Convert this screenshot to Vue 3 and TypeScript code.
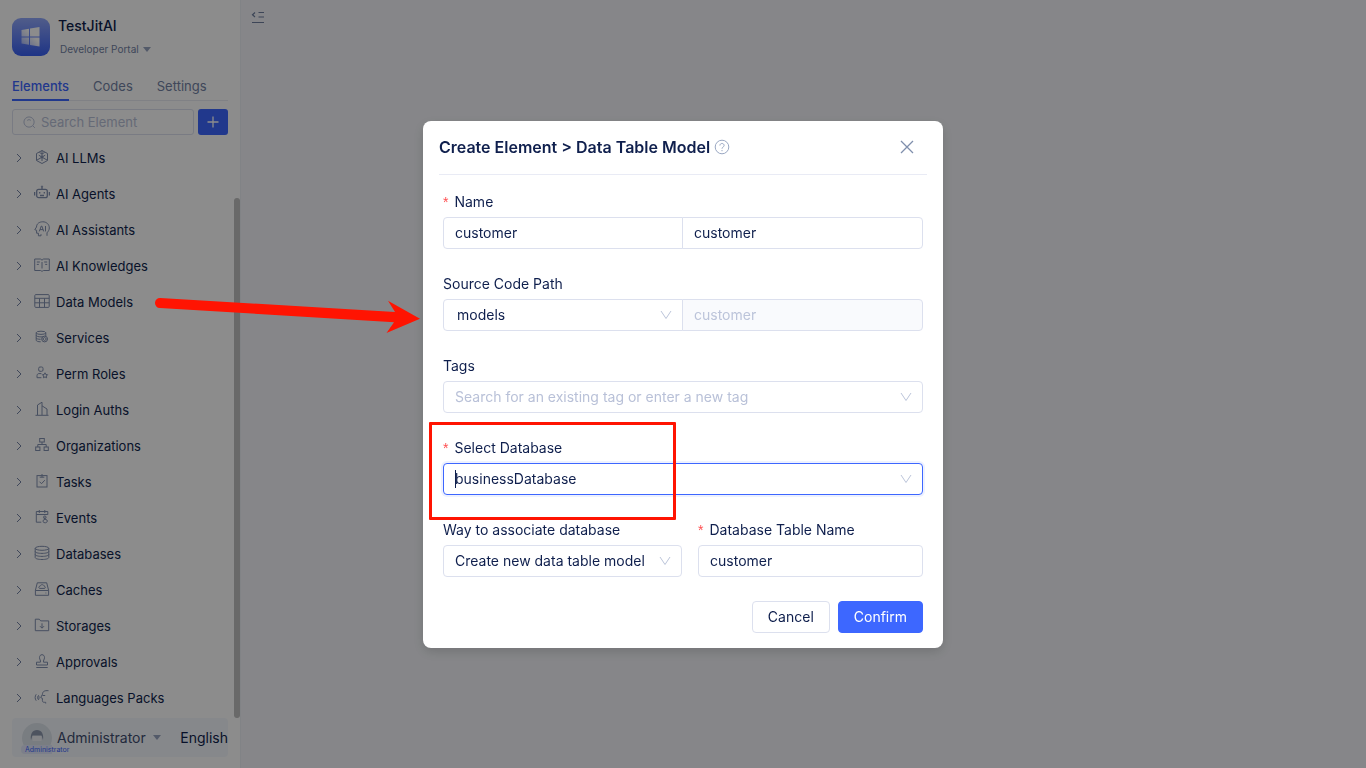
<script setup lang="ts">
import { ref } from 'vue'

interface MenuItem {
  label: string
  icon: string
}

const menu: MenuItem[] = [
  { label: 'AI LLMs', icon: '<path d="M8 1.500 13.500 4.500v7L8 14.500l-5.500-3v-7z"/><path d="M8 1.500v5.800M8 8.200l5.300 3M8 8.200l-5.300 3M4.800 6.200 8 8.100l3.200-1.900M8 8.500v3.500M5.400 3.400 8 5l2.600-1.600"/><circle cx="8" cy="8" r="1"/>' },
  { label: 'AI Agents', icon: '<rect x="2.700" y="4.300" width="10.600" height="8.400" rx="2" stroke-width="1.300"/><path d="M8 4V2M.6 7v3.600M15.400 7v3.600M5.700 7v1.600M10.300 7v1.600M6 10.500h4" stroke-width="1.300"/><circle cx="8" cy="1.500" r=".6"/>' },
  { label: 'AI Assistants', icon: '<path d="M4.400 14.800v-2.600H2.600V9.300L.8 8.700 2.500 6C2.600 2.700 5.200.8 8.800.8c3.700 0 6.500 2.600 6.500 6.100 0 2-1 3.500-2.300 4.900v3M4.400 14.800H7v-1.600"/><path d="m5.300 10.400 2-5.400h.5l1.900 5.400M6 8.600h3M11.500 5v5.400"/>' },
  { label: 'AI Knowledges', icon: '<path d="M8 3.300C7.700 2.300 7 2 6 2H.7v11.500H6.500c.8 0 1.200.4 1.500 1 .3-.6.700-1 1.500-1h5.800V2H10c-1 0-1.700.3-2 1.300zM8 5v6.500M2.800 5h3M2.800 7.400h2M10.200 5h3M11.200 7.400h2"/>' },
  { label: 'Data Models', icon: '<rect x=".8" y="1.600" width="14.400" height="12.800" rx="1"/><path d="M.8 5.300h14.400M.8 9.800h14.400M5.500 5.300v9M10.500 5.300v9"/>' },
  { label: 'Services', icon: '<ellipse cx="7" cy="3.800" rx="4.800" ry="1.600"/><path d="M2.200 3.800v7.400c0 1 2 1.600 4.500 1.600M11.800 3.800V7M2.200 6.300c0 1 2.200 1.600 4.800 1.600 1.200 0 2.400 0 3.200-.5M2.200 8.800c0 1 2 1.500 4.400 1.500"/><circle cx="10.600" cy="10" r="2.900"/><path d="m8.700 10 1.900-1.600L12.500 10l-1.900 1.600z"/>' },
  { label: 'Perm Roles', icon: '<rect x="4.700" y="2" width="4.300" height="4.300" rx="1.300"/><path d="M7.400 12.700H3v-2c0-1.300.8-2.100 2-2.100h2.400M11 7.800l.8 1.700 1.800.2-1.300 1.300.3 1.800-1.600-.9-1.600.9.3-1.800-1.300-1.300 1.800-.2z"/>' },
  { label: 'Login Auths', icon: '<path d="M1.500 14.300h13M3.500 14V4L8 1.200V14M8 4.800l5 3.200v6"/>' },
  { label: 'Organizations', icon: '<rect x="5.700" y="1.500" width="4.600" height="3.500"/><rect x="1.700" y="10" width="4.200" height="3.500"/><rect x="10.100" y="10" width="4.200" height="3.500"/><path d="M8 5v2.500M3.800 10V7.500h8.400V10"/>' },
  { label: 'Tasks', icon: '<rect x="3" y="2.600" width="10" height="11.400"/><path d="M8 1v3.200M5.700 4.200h4.600M5.500 8.700l2 2 3.300-3.500"/>' },
  { label: 'Events', icon: '<path d="M2.300 13.200V2.500h11.500v3.200M2.300 5.500h11.500M5.300 1v3M10.800 1v3M2.300 13.200h5"/><circle cx="10.800" cy="8.300" r="1.300"/><path d="M10.800 8.300v2.500M9 11.500c1.300-1.700 4.600-1.200 4.400.6-.3 2-3.300 2.200-4.400.6z"/>' },
  { label: 'Databases', icon: '<ellipse cx="8" cy="3.300" rx="6.800" ry="2"/><path d="M1.200 3.300v9.200c0 1.200 3 2 6.800 2s6.800-.8 6.800-2V3.300M1.200 6.400c0 1.200 3 2 6.800 2s6.800-.8 6.800-2M1.200 9.400c0 1.200 3 2 6.800 2s6.800-.8 6.800-2"/>' },
  { label: 'Caches', icon: '<path d="M3.300 1.800h9.400l1.900 7.500v5H1.400v-5zM1.400 9.500h13.200M11.500 12h.8M5.500 7.400h5.200c1-.7.500-2.200-.5-2.200-.3-2-3.800-2-4.100 0-1.300 0-1.700 1.600-.6 2.200z"/>' },
  { label: 'Storages', icon: '<path d="M1.300 13.700V2.200h4l1.400 1.700h8v9.800zM8 6.300v4.700M6 9.200l2 2 2-2"/>' },
  { label: 'Approvals', icon: '<path d="M2.300 14.500h11.400M2.500 12V9.200h3.900c.6-1.700-.9-2.700-.9-4.500 0-1.900 1-3 2.500-3s2.500 1.100 2.500 3c0 1.800-1.500 2.800-.9 4.500h3.900V12z"/>' },
  { label: 'Languages Packs', icon: '<path d="M14.500 1.700c-4-.4-6 .8-6 3.500L6.700 8.600l1.700.7v2.200c0 1.300.6 1.900 2 1.800h1.300v1.200M8.500 6.500h2.700M4.500 6.500c.7 1.300.7 2.900 0 4.200M2.200 5.300C.8 7.300.8 9.700 2.200 11.700M4.500 6.500c-1.200 1-1.200 3.200 0 4.200"/>' },
]

const tabs = ['Elements', 'Codes', 'Settings']
const activeTab = ref('Elements')
const search = ref('')
const title = ref('customer')
const code = ref('customer')
const folder = ref('models')
const tag = ref('')
const database = ref('businessDatabase')
const way = ref('Create new data table model')
const tableName = ref('customer')
</script>

<template>
  <div class="page">
    <aside class="sidebar">
      <header class="app-head">
        <svg class="logo" viewBox="0 0 38 38" aria-hidden="true">
          <defs>
            <linearGradient id="logoFill" x1="0" y1="0" x2="0" y2="1">
              <stop offset="0" stop-color="#93a9fb" />
              <stop offset="1" stop-color="#3860f4" />
            </linearGradient>
            <linearGradient id="paneFill" x1="0" y1="1" x2="1" y2="0">
              <stop offset="0" stop-color="#fff" stop-opacity=".4" />
              <stop offset=".6" stop-color="#fff" />
            </linearGradient>
          </defs>
          <rect width="38" height="38" rx="9" fill="url(#logoFill)" />
          <path d="M9.500 12l7.500-1.300v7.800H9.500zM18 10.500l9.500-1.500v9.500H18zM9.500 19.500H17v7.300l-7.500-1.300zM18 19.500h9.500V28.500L18 27z" fill="url(#paneFill)" />
        </svg>
        <div>
          <h1 class="app-name">TestJitAI</h1>
          <button class="portal" type="button">Developer Portal <i class="caret"></i></button>
        </div>
      </header>

      <nav class="tabs">
        <button v-for="t in tabs" :key="t" type="button" class="tab" :class="{ active: t === activeTab }" @click="activeTab = t">{{ t }}</button>
      </nav>

      <div class="search-row">
        <label class="search">
          <svg viewBox="0 0 14 14" aria-hidden="true"><circle cx="6.500" cy="6.500" r="5.500" /><path d="m10.500 10.500 2.300 2.300M4.500 4.800c1-1.100 3-1.100 4 0" /></svg>
          <input v-model="search" type="text" placeholder="Search Element" aria-label="Search Element" />
        </label>
        <button class="add" type="button" aria-label="Add element">
          <svg viewBox="0 0 12 12" aria-hidden="true"><path d="M6 .5v11M.5 6h11" /></svg>
        </button>
      </div>

      <div class="list-wrap">
        <ul class="list">
          <li v-for="m in menu" :key="m.label">
            <button type="button" class="row">
              <svg class="chev" viewBox="0 0 14 14" aria-hidden="true"><path d="m5 3 4 4-4 4" /></svg>
              <svg class="ico" viewBox="0 0 16 16" aria-hidden="true" v-html="m.icon"></svg>
              <span>{{ m.label }}</span>
            </button>
          </li>
        </ul>
        <div class="thumb"></div>
      </div>

      <footer class="user">
        <div class="avatar">
          <svg viewBox="0 0 30 30" aria-hidden="true">
            <circle cx="15" cy="15" r="15" fill="#dde3eb" />
            <path d="M9 17c-1-6 1.500-10 6-10s7 4 6 10l-1.500-4.500h-9z" fill="#8c98ae" />
            <path d="M10.500 13h9v5h-9z" fill="#eef1f6" />
          </svg>
          <span class="badge">Administrator</span>
        </div>
        <button class="who" type="button">Administrator <i class="caret"></i></button>
        <button class="lang" type="button">English</button>
      </footer>
    </aside>

    <main class="main">
      <button class="fold" type="button" aria-label="Collapse sidebar">
        <svg viewBox="0 0 14 12" aria-hidden="true"><path d="M7.500 1.500H13M7.500 6H13M1 11.500h12M4 1.500 1.500 3.700 4 6" /></svg>
      </button>
    </main>

    <div class="mask">
      <form class="modal" role="dialog" aria-labelledby="dlgTitle" @submit.prevent>
        <header class="modal-head">
          <h2 id="dlgTitle">Create Element &gt; Data Table Model</h2>
          <svg class="help" viewBox="0 0 16 16" aria-hidden="true"><circle cx="8" cy="8" r="6.800" /><path d="M5.900 6.500c0-2.700 4.200-2.700 4.200 0C10.100 8 8 8 8 9.700M8 11v1.200" /></svg>
          <button class="close" type="button" aria-label="Close">
            <svg viewBox="0 0 14 14" aria-hidden="true"><path d="m1 1 12 12M13 1 1 13" /></svg>
          </button>
        </header>

        <div class="body">
          <div class="field">
            <label class="req" for="title">Name</label>
            <div class="group">
              <input id="title" v-model="title" class="ctl left" type="text" />
              <div class="right">
                <input v-model="code" class="ctl" type="text" aria-label="Code name" />
              </div>
            </div>
          </div>

          <div class="field">
            <label for="folder">Source Code Path</label>
            <div class="group">
              <div class="pick">
                <select id="folder" v-model="folder" class="ctl left"><option>models</option></select>
                <svg viewBox="0 0 12 12" aria-hidden="true"><path d="m1 2 5 7.500L11 2" /></svg>
              </div>
              <div class="right">
                <input class="ctl" type="text" value="customer" aria-label="Path name" disabled />
              </div>
            </div>
          </div>

          <div class="field">
            <label for="tags">Tags</label>
            <div class="pick">
              <input id="tags" v-model="tag" class="ctl" type="text" placeholder="Search for an existing tag or enter a new tag" />
              <svg viewBox="0 0 12 12" aria-hidden="true"><path d="m1 2 5 7.500L11 2" /></svg>
            </div>
          </div>

          <div class="field">
            <label class="req" for="db">Select Database</label>
            <div class="pick">
              <select id="db" v-model="database" class="ctl focused"><option>businessDatabase</option></select>
              <i class="cursor"></i>
              <svg viewBox="0 0 12 12" aria-hidden="true"><path d="m1 2 5 7.500L11 2" /></svg>
            </div>
            <div class="highlight"></div>
          </div>

          <div class="pair">
            <div class="field">
              <label for="way">Way to associate database</label>
              <div class="pick">
                <select id="way" v-model="way" class="ctl"><option>Create new data table model</option></select>
                <svg viewBox="0 0 12 12" aria-hidden="true"><path d="m1 2 5 7.500L11 2" /></svg>
              </div>
            </div>
            <div class="field">
              <label class="req" for="table">Database Table Name</label>
              <input id="table" v-model="tableName" class="ctl" type="text" />
            </div>
          </div>

          <footer class="actions">
            <button class="btn" type="button">Cancel</button>
            <button class="btn primary" type="submit">Confirm</button>
          </footer>
        </div>

        <svg class="arrow" viewBox="0 0 266 36" aria-hidden="true">
          <path d="M5.200 -2A5 5 0 0 0 4.800 8L239 22.300 231.500 33 265 18.700 233 .7 240 11.900z" />
        </svg>
      </form>
    </div>
  </div>
</template>

<style>
body {
  margin: 0;
}
</style>

<style scoped>
* {
  box-sizing: border-box;
}
.page {
  display: flex;
  min-height: 100vh;
  background: #f4f5fa;
  color: #0f1f4d;
  font-family: Inter, "Liberation Sans", sans-serif;
  font-size: 14px;
}
button {
  padding: 0;
  border: 0;
  background: none;
  font: inherit;
  color: inherit;
}
h1,
h2,
ul {
  margin: 0;
  padding: 0;
}
svg {
  display: block;
  flex: none;
  fill: none;
  stroke: currentColor;
}
.sidebar {
  flex: none;
  display: flex;
  flex-direction: column;
  width: 241px;
  height: 100vh;
  padding: 16px 0 11px;
  border-right: 1px solid #eceef5;
  background: #fff;
}
.app-head {
  display: flex;
  gap: 8px;
  padding: 0 12px;
}
.logo {
  width: 38px;
  height: 38px;
  margin-top: 2px;
  stroke: none;
}
.app-name {
  font-size: 14px;
  font-weight: 500;
  line-height: 20px;
}
.portal {
  display: flex;
  align-items: center;
  gap: 4px;
  padding-left: 2px;
  margin-top: 5px;
  font-size: 10px;
  line-height: 16px;
  color: #7382a4;
}
.caret {
  border: 4px solid transparent;
  border-top: 5px solid #98a4c0;
  border-bottom: 0;
}
.tabs {
  display: flex;
  gap: 24px;
  margin: 15px 12px 0;
  border-bottom: 1px solid #e9ebf3;
}
.tab {
  height: 29px;
  margin-bottom: -1px;
  border-bottom: 2px solid transparent;
  font-size: 13px;
  color: #7382a4;
}
.tab.active {
  border-color: #3d67ff;
  color: #3d67ff;
  font-weight: 500;
}
.search-row {
  display: flex;
  gap: 4px;
  margin: 8px 12px 0;
}
.search {
  flex: 1;
  display: flex;
  align-items: center;
  gap: 5px;
  height: 26px;
  min-width: 0;
  padding: 0 10px;
  border: 1px solid #dce0ee;
  border-radius: 3px;
  color: #b3bdd6;
}
.search svg {
  width: 13px;
  height: 13px;
}
.search input {
  flex: 1;
  min-width: 0;
  padding: 0;
  border: 0;
  outline: 0;
  background: none;
  font: inherit;
  font-size: 13px;
}
input::placeholder {
  color: #b9c1d8;
  opacity: 1;
}
.add {
  display: grid;
  place-items: center;
  width: 30px;
  border-radius: 3px;
  background: #3d67ff;
  color: #fff;
}
.add svg {
  width: 12px;
  height: 12px;
  stroke-width: 1.3;
}
.list-wrap {
  position: relative;
  flex: 1;
  min-height: 0;
  margin-top: 5px;
}
.list {
  height: 100%;
  overflow: hidden;
  list-style: none;
}
.row {
  display: flex;
  align-items: center;
  width: 100%;
  height: 36px;
  padding: 0 12px;
  font-size: 13px;
}
.chev {
  width: 14px;
  height: 14px;
  margin-right: 8px;
  color: #7382a4;
}
.ico {
  width: 16px;
  height: 16px;
  margin-right: 6px;
  margin-bottom: 2px;
  color: #8290b0;
}
.thumb {
  position: absolute;
  right: 0;
  bottom: 0;
  width: 6px;
  height: 90%;
  border-radius: 3px;
  background: #bfbfbf;
}
.user {
  display: flex;
  align-items: center;
  height: 39px;
  margin: 0 12px;
  padding-left: 10px;
  border-radius: 4px;
  background: #f5f8fd;
  white-space: nowrap;
}
.avatar {
  position: relative;
  width: 30px;
  height: 30px;
  margin-right: 5px;
}
.avatar svg {
  width: 30px;
  height: 30px;
  stroke: none;
}
.badge {
  position: absolute;
  left: -1px;
  bottom: -1px;
  padding: 0 4px;
  border-radius: 4px;
  background: linear-gradient(90deg, #e2e8fb 60%, transparent 60%);
  font-size: 7px;
  line-height: 9px;
  color: #3d67ff;
}
.who {
  display: flex;
  align-items: center;
  gap: 7px;
  line-height: 14px;
  color: #3f4d70;
}
.lang {
  margin-left: auto;
}
.main {
  flex: 1;
  padding: 11px 10px;
}
.fold {
  display: block;
  color: #6f7f9f;
}
.fold svg {
  width: 14px;
  height: 12px;
  stroke-width: 1.2;
}
.mask {
  position: fixed;
  inset: 0;
  display: grid;
  place-items: center;
  background: rgba(0, 0, 0, 0.45);
}
.modal {
  position: relative;
  width: 520px;
  max-width: 100%;
  border-radius: 8px;
  background: #fff;
  box-shadow: 0 4px 12px rgba(0, 0, 0, 0.15);
}
.modal-head {
  display: flex;
  align-items: center;
  height: 54px;
  margin: 0 16px;
  border-bottom: 1px solid #e9ebf5;
}
.modal-head h2 {
  font-size: 16px;
  font-weight: 600;
}
.help {
  width: 16px;
  height: 16px;
  margin-left: 4px;
  color: #9aa8c3;
}
.close {
  margin: 0 13px 0 auto;
  color: #7f8fac;
}
.close svg {
  width: 14px;
  height: 14px;
  stroke-width: 1.3;
}
.body {
  padding: 16px 20px 15px;
}
.field {
  position: relative;
  margin-bottom: 24px;
}
.field label {
  display: block;
  margin-bottom: 4px;
  line-height: 22px;
}
.req::before {
  content: "*";
  margin-right: 6px;
  font-family: "Liberation Sans", sans-serif;
  color: #ff4d4f;
}
.group {
  display: grid;
  grid-template-columns: 1fr 1fr;
}
.right {
  min-width: 0;
  margin-left: -1px;
}
.pick {
  position: relative;
  min-width: 0;
}
.pick svg {
  position: absolute;
  top: 10px;
  right: 11px;
  width: 12px;
  height: 12px;
  color: #bcc5da;
  pointer-events: none;
}
.ctl {
  display: block;
  width: 100%;
  min-width: 0;
  height: 32px;
  padding: 0 11px;
  border: 1px solid #dce0ee;
  border-radius: 4px;
  outline: 0;
  background: #fff;
  font: inherit;
  color: inherit;
  appearance: none;
}
.ctl.left {
  border-radius: 4px 0 0 4px;
}
.right .ctl {
  border-radius: 0 4px 4px 0;
}
select.left {
  padding-left: 13px;
}
.ctl:disabled {
  background: #f9fafd;
  color: #bcc4da;
}
.focused {
  border-color: #3d67ff;
  box-shadow: 0 0 0 2px #eef2ff;
}
.cursor {
  position: absolute;
  top: 7px;
  left: 12px;
  width: 1px;
  height: 18px;
  background: #0f1f4d;
}
.highlight {
  position: absolute;
  inset: -15px 247px -25px -14px;
  border: 3px solid #ff1402;
  border-radius: 1px;
  pointer-events: none;
}
.pair {
  display: grid;
  grid-template-columns: 17fr 16fr;
  gap: 16px;
}
.actions {
  display: flex;
  justify-content: flex-end;
  gap: 8px;
}
.btn {
  height: 32px;
  padding: 0 15px;
  border: 1px solid #dce0ee;
  border-radius: 4px;
}
.primary {
  border-color: #3d67ff;
  background: #3d67ff;
  color: #fff;
}
.arrow {
  position: absolute;
  top: 179px;
  right: 522px;
  width: 266px;
  height: 36px;
  overflow: visible;
  fill: #ff1402;
  stroke: none;
  pointer-events: none;
}
</style>
